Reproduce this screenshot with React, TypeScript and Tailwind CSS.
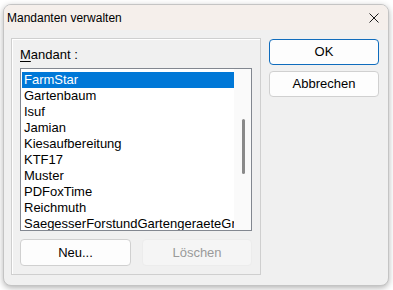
const items = [
  'FarmStar',
  'Gartenbaum',
  'Isuf',
  'Jamian',
  'Kiesaufbereitung',
  'KTF17',
  'Muster',
  'PDFoxTime',
  'Reichmuth',
  'SaegesserForstundGartengeraeteGr',
];

const font = { fontFamily: '"Liberation Sans", Arial, sans-serif' };

const App = () => {
  return (
    <div className="w-[393px] h-[290px] bg-white pl-[3px] pt-[4px]" style={font}>
      <div className="w-[386px] h-[282px] rounded-[8px] border border-[#c4c4c4] bg-[#f0f0f0] overflow-hidden shadow-[0_2px_6px_rgba(0,0,0,0.3)] flex flex-col">
        {/* title bar */}
        <div className="h-[25px] bg-[#f5efeb] flex items-center justify-between pl-[3px] pr-[9px]">
          <span className="text-[12px] text-black leading-none">Mandanten verwalten</span>
          <svg width="10" height="10" viewBox="0 0 10 10" className="mt-[1px]">
            <path d="M0.5 0.5 L9.5 9.5 M9.5 0.5 L0.5 9.5" stroke="#1a1a1a" strokeWidth="1" />
          </svg>
        </div>

        {/* body */}
        <div className="flex pl-[7px] pt-[8px] gap-[8px]">
          <div className="w-[250px] h-[237px] border border-[#cfcfcf] shadow-[inset_1px_1px_0_#ffffff] px-[8px] pt-[8px] flex flex-col">
            <div className="text-[13px] leading-[16px] text-black">
              <span className="underline underline-offset-[2px]">M</span>andant :
            </div>
            <div className="mt-[5px] h-[163px] w-[232px] border border-[#828790] bg-white flex overflow-hidden">
              <div className="flex-1 pt-[3px] pl-px overflow-hidden">
                {items.map((it, i) => (
                  <div
                    key={it}
                    className={
                      'h-[16px] leading-[16px] text-[13px] pl-[2px] whitespace-nowrap ' +
                      (i === 0 ? 'bg-[#0078d7] text-white' : 'text-black')
                    }
                  >
                    {it}
                  </div>
                ))}
              </div>
              <div className="w-[17px] bg-[#fafafa] pt-[50px] flex justify-center">
                <div className="w-[3px] h-[55px] rounded-full bg-[#8a8a8a] ml-px" />
              </div>
            </div>
            <div className="mt-[8px] flex justify-between">
              <button className="w-[111px] h-[27px] rounded-[4px] border border-[#d0d0d0] bg-[#fdfdfd] text-[13px] text-black">
                Neu...
              </button>
              <button className="w-[110px] h-[27px] rounded-[4px] border border-[#ececec] bg-[#f5f5f5] text-[13px] text-[#9a9a9a]">
                Löschen
              </button>
            </div>
          </div>

          <div className="flex flex-col gap-[6px] pt-[1px]">
            <button className="w-[110px] h-[26px] rounded-[4px] border border-[#0f6cbd] bg-[#fdfdfd] text-[13px] text-black">
              OK
            </button>
            <button className="w-[110px] h-[26px] rounded-[4px] border border-[#d0d0d0] bg-[#fdfdfd] text-[13px] text-black">
              Abbrechen
            </button>
          </div>
        </div>
      </div>
    </div>
  );
};

export default App;
